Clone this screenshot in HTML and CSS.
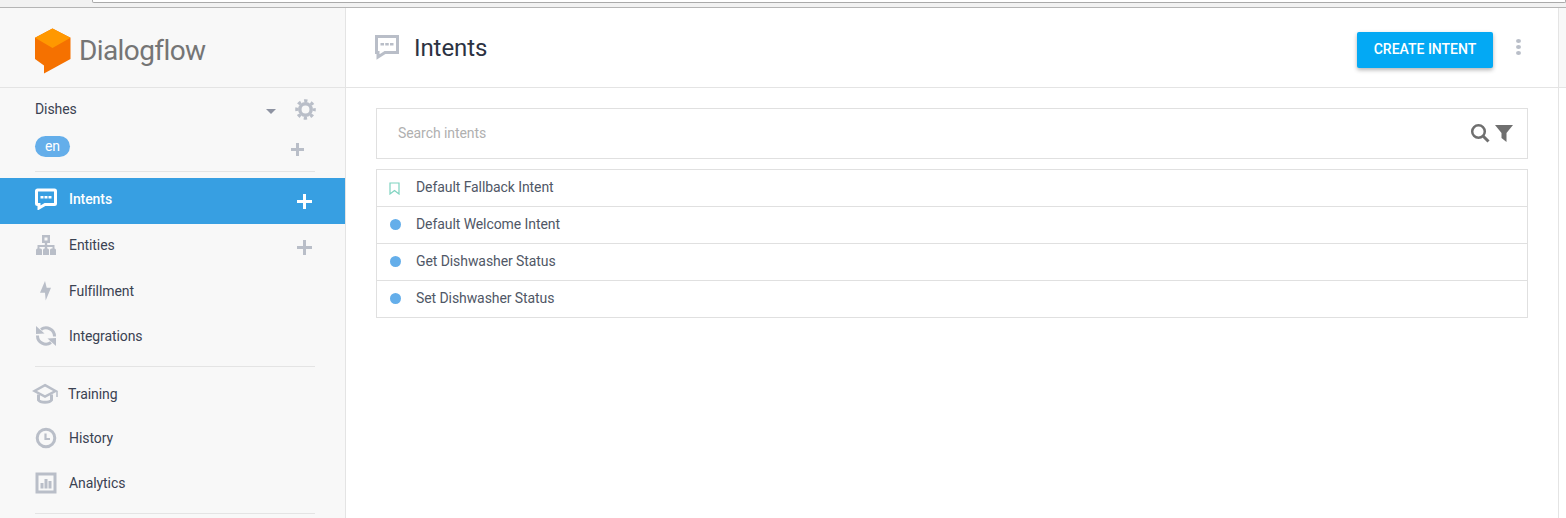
FILE: index.html
```html
<!DOCTYPE html>
<html lang="en">
<head>
    <meta charset="UTF-8">
    <meta name="viewport" content="width=device-width, initial-scale=1.0">
    <title>Dialogflow - Intents</title>
    <link rel="stylesheet" href="styles.css">
</head>
<body>
    <div class="browser-strip">
        <div class="address-box"></div>
    </div>

    <div class="app">
        <aside class="sidebar">
            <div class="logo">
                <svg class="logo-icon" width="36" height="46" viewBox="0 0 36 46">
                    <path d="M17.500 0.500L35.500 9.800V31L9 45.500V37.500L0 31V9.800Z" fill="#f57100"/>
                    <path d="M17.500 0.500L35.500 9.800L17.500 20L0 9.800Z" fill="#ff9800"/>
                </svg>
                <span class="logo-text">Dialogflow</span>
            </div>

            <div class="project">
                <div class="project-row">
                    <span class="project-name">Dishes</span>
                    <span class="caret"></span>
                    <svg class="gear" width="21" height="21" viewBox="0 0 24 24">
                        <circle cx="12" cy="12" r="6.500" fill="none" stroke="#b9bec8" stroke-width="4"/>
                        <circle cx="12" cy="12" r="10" fill="none" stroke="#b9bec8" stroke-width="3.500" stroke-dasharray="3.850 4" stroke-dashoffset="1.900"/>
                    </svg>
                </div>
                <div class="lang-row">
                    <span class="lang-pill">en</span>
                    <span class="plus plus-lang"></span>
                </div>
            </div>

            <div class="divider"></div>

            <nav class="nav nav-first">
                <a class="nav-item active" href="#">
                    <svg class="nav-icon" width="22" height="22" viewBox="0 0 22 22">
                        <path d="M2.500 2H19.500A1 1 0 0 1 20.500 3V15.500A1 1 0 0 1 19.500 16.500H10L4 20V16.500H2.500A1 1 0 0 1 1.500 15.500V3A1 1 0 0 1 2.500 2Z" fill="none" stroke="#fff" stroke-width="3"/>
                        <rect x="5.500" y="8" width="3" height="2.500" fill="#fff"/>
                        <rect x="9.500" y="8" width="3" height="2.500" fill="#fff"/>
                        <rect x="13.500" y="8" width="3" height="2.500" fill="#fff"/>
                    </svg>
                    <span>Intents</span>
                    <span class="plus plus-white"></span>
                </a>
                <a class="nav-item" href="#">
                    <svg class="nav-icon" width="22" height="22" viewBox="0 0 22 22">
                        <path d="M7 1H15V9H12.200V11H19.500V15H17.500V13H12.200V15H9.800V13H4.500V15H2.500V11H9.800V9H7ZM9.500 3.500V6.500H12.500V3.500Z" fill="#b9bec8" fill-rule="evenodd"/>
                        <path d="M1 16A1.500 1.500 0 0 1 2.500 14.500H5.500A1.500 1.500 0 0 1 7 16V21H1ZM8 16A1.500 1.500 0 0 1 9.500 14.500H12.500A1.500 1.500 0 0 1 14 16V21H8ZM15 16A1.500 1.500 0 0 1 16.500 14.500H19.500A1.500 1.500 0 0 1 21 16V21H15Z" fill="#b9bec8"/>
                    </svg>
                    <span>Entities</span>
                    <span class="plus"></span>
                </a>
                <a class="nav-item" href="#">
                    <svg class="nav-icon" width="22" height="22" viewBox="0 0 22 22">
                        <path d="M10 1L5 12.700H10L10.700 20.500L16 7.700H11.700Z" fill="#b9bec8"/>
                    </svg>
                    <span>Fulfillment</span>
                </a>
                <a class="nav-item nav-last" href="#">
                    <svg class="nav-icon" width="22" height="22" viewBox="0 0 22 22">
                        <path d="M6 4.500A8.500 8.500 0 0 1 19.500 11.500" fill="none" stroke="#b9bec8" stroke-width="3"/>
                        <path d="M16 17.500A8.500 8.500 0 0 1 2.500 10.500" fill="none" stroke="#b9bec8" stroke-width="3"/>
                        <path d="M1 1L9.500 8.500L1 9Z" fill="#b9bec8"/>
                        <path d="M21 21L12.500 13.500L21 13Z" fill="#b9bec8"/>
                    </svg>
                    <span>Integrations</span>
                </a>
            </nav>

            <div class="divider divider-nav"></div>

            <nav class="nav nav-second">
                <a class="nav-item nav-training" href="#">
                    <svg class="nav-icon icon-training" width="26" height="22" viewBox="0 0 26 22">
                        <path d="M13 2.200L23.500 8L13 13.500L2.500 8Z" fill="none" stroke="#b9bec8" stroke-width="2.500"/>
                        <path d="M6.500 11.500V17C8.500 20 17.500 20 19.500 17V11.500" fill="none" stroke="#b9bec8" stroke-width="3"/>
                        <path d="M25 8V14" stroke="#b9bec8" stroke-width="1.500"/>
                    </svg>
                    <span>Training</span>
                </a>
                <a class="nav-item nav-history" href="#">
                    <svg class="nav-icon" width="22" height="22" viewBox="0 0 22 22">
                        <circle cx="11" cy="11" r="8.800" fill="none" stroke="#b9bec8" stroke-width="3"/>
                        <path d="M10.500 6.500V12H15" fill="none" stroke="#b9bec8" stroke-width="2.200"/>
                    </svg>
                    <span>History</span>
                </a>
                <a class="nav-item" href="#">
                    <svg class="nav-icon" width="22" height="22" viewBox="0 0 22 22">
                        <rect x="2" y="2" width="18" height="18" fill="none" stroke="#b9bec8" stroke-width="3"/>
                        <rect x="5.500" y="11" width="3" height="5.500" fill="#b9bec8"/>
                        <rect x="9.500" y="7" width="3" height="9.500" fill="#b9bec8"/>
                        <rect x="13.500" y="9" width="3" height="7.500" fill="#b9bec8"/>
                    </svg>
                    <span>Analytics</span>
                </a>
            </nav>

            <div class="divider divider-bottom"></div>
        </aside>

        <main class="content">
            <header class="page-header">
                <svg class="title-icon" width="26" height="26" viewBox="0 0 26 26">
                    <path d="M2.500 2.500H23.500V18.500H11L4 23V18.500H2.500Z" fill="none" stroke="#b9bec8" stroke-width="3"/>
                    <rect x="6.500" y="9" width="3.500" height="2.500" fill="#b9bec8"/>
                    <rect x="11.250" y="9" width="3.500" height="2.500" fill="#b9bec8"/>
                    <rect x="16" y="9" width="3.500" height="2.500" fill="#b9bec8"/>
                </svg>
                <h1>Intents</h1>
                <button class="btn-create">CREATE INTENT</button>
                <div class="more">
                    <span></span>
                    <span></span>
                    <span></span>
                </div>
            </header>

            <div class="body-wrap">
                <div class="search-box">
                    <span class="search-text">Search intents</span>
                    <svg width="20" height="20" viewBox="0 0 20 20">
                        <circle cx="8.500" cy="8.500" r="6.300" fill="none" stroke="#6f6f6f" stroke-width="2.500"/>
                        <path d="M13 13L18.500 18.500" stroke="#6f6f6f" stroke-width="3"/>
                    </svg>
                    <svg class="filter" width="18" height="18" viewBox="0 0 18 18">
                        <path d="M0 1H18L11.500 9V18L6.500 14V9Z" fill="#6f6f6f"/>
                    </svg>
                </div>

                <ul class="intent-list">
                    <li>
                        <svg class="bookmark" width="11" height="13" viewBox="0 0 11 13">
                            <path d="M1 1H10V12L5.500 8.500L1 12Z" fill="none" stroke="#7fd3c0" stroke-width="1.200"/>
                        </svg>
                        <span>Default Fallback Intent</span>
                    </li>
                    <li><i class="dot"></i><span>Default Welcome Intent</span></li>
                    <li><i class="dot"></i><span>Get Dishwasher Status</span></li>
                    <li><i class="dot"></i><span>Set Dishwasher Status</span></li>
                </ul>
            </div>
        </main>

        <div class="gutter"></div>
    </div>
</body>
</html>
```

FILE: styles.css
```css
* {
    margin: 0;
    padding: 0;
    box-sizing: border-box;
}

html, body {
    height: 518px;
    overflow: hidden;
}

body {
    font-family: 'Roboto', sans-serif;
    font-size: 14px;
    letter-spacing: -0.08px;
    color: #3b4252;
    background-color: #fff;
}

.browser-strip {
    height: 8px;
    background-color: #f2f2f2;
    border-bottom: 1px solid #b5b5b5;
    padding-left: 92px;
}

.address-box {
    height: 3px;
    background-color: #fff;
    border: 1px solid #aaa;
    border-top: none;
    border-radius: 0 0 2px 2px;
}

.app {
    display: flex;
    height: 510px;
}

/* sidebar */
.sidebar {
    width: 346px;
    flex-shrink: 0;
    background-color: #f8f8f8;
    border-right: 1px solid #e4e4e4;
}

.logo {
    height: 80px;
    padding: 20px 0 0 35px;
    display: flex;
    align-items: flex-start;
    border-bottom: 1px solid #e4e4e4;
}

.logo-text {
    font-size: 28px;
    color: #757575;
    margin: 6px 0 0 8px;
    letter-spacing: -0.6px;
}

.project {
    padding: 0 29px 0 35px;
}

.project-row {
    height: 42px;
    display: flex;
    align-items: center;
}

.project-name {
    flex: 1;
    color: #3b4252;
}

.caret {
    width: 0;
    height: 0;
    border-left: 5px solid transparent;
    border-right: 5px solid transparent;
    border-top: 5px solid #8e93a2;
    margin: 4px 19px 0 0;
}

.lang-row {
    height: 41px;
    padding-top: 6px;
    display: flex;
    justify-content: space-between;
}

.lang-pill {
    width: 35px;
    height: 21px;
    border-radius: 11px;
    background-color: #64aeea;
    color: #fff;
    text-align: center;
    line-height: 20px;
}

.plus {
    position: relative;
    display: block;
    width: 15px;
    height: 15px;
    margin: 4px 3px 0 auto;
}

.plus::before,
.plus::after {
    content: "";
    position: absolute;
    background-color: #b9bec8;
}

.plus::before {
    left: 0;
    top: 6px;
    width: 100%;
    height: 3px;
}

.plus::after {
    left: 6px;
    top: 0;
    width: 3px;
    height: 100%;
}

.plus-lang {
    margin: 7px 12px 0 0;
    width: 13px;
    height: 13px;
}

.plus-lang::before {
    top: 5px;
}

.plus-lang::after {
    left: 5px;
}

.plus-white::before,
.plus-white::after {
    background-color: #fff;
}

.divider {
    height: 1px;
    margin: 0 30px 0 35px;
    background-color: #e4e4e4;
}

.nav-first {
    margin-top: 6px;
}

.nav-item {
    height: 46px;
    display: flex;
    align-items: center;
    padding: 0 30px 4px 35px;
    color: #3b4252;
    text-decoration: none;
}

.nav-item.active {
    background-color: #379fe2;
    color: #fff;
    font-weight: 500;
}

.nav-item.nav-last {
    height: 45px;
    padding-bottom: 5px;
}

.nav-icon {
    margin-right: 12px;
    flex-shrink: 0;
}

.divider-nav {
    margin-top: 5px;
}

.nav-second {
    margin-top: 7px;
}

.nav-second .nav-item {
    height: 44.500px;
}

.nav-second .nav-history {
    padding-bottom: 6px;
}

.icon-training {
    margin: 0 10px 0 -3px;
}

.divider-bottom {
    margin-top: 5.500px;
}

/* main content */
.content {
    flex: 1;
    min-width: 0;
    border-right: 1px solid #e4e4e4;
}

.gutter {
    width: 7px;
    height: 80px;
    background-color: #f8f8f8;
    border-bottom: 1px solid #e4e4e4;
}

.page-header {
    height: 80px;
    display: flex;
    align-items: center;
    padding: 0 37px 0 28px;
    border-bottom: 1px solid #e4e4e4;
}

.title-icon {
    margin: -1px 14px 0 0;
}

.page-header h1 {
    flex: 1;
    font-size: 24px;
    font-weight: 400;
    color: #2c3242;
    margin-top: 1px;
}

.btn-create {
    width: 136px;
    height: 36px;
    margin: 4px 23px 0 0;
    padding-bottom: 2px;
    background-color: #03a9f4;
    border: none;
    border-radius: 2px;
    color: #fff;
    font-family: inherit;
    font-size: 14px;
    font-weight: 500;
    box-shadow: 0 2px 4px rgba(0, 0, 0, 0.3);
}

.more {
    display: flex;
    flex-direction: column;
    gap: 2px;
    margin-top: -2px;
}

.more span {
    display: block;
    width: 5px;
    height: 4px;
    border-radius: 50%;
    background-color: #b9bec8;
}

.body-wrap {
    padding: 20px 30px 0;
}

.search-box {
    height: 51px;
    display: flex;
    align-items: center;
    padding: 0 14px 2px 21px;
    border: 1px solid #e0e0e0;
    margin-bottom: 10px;
}

.search-text {
    flex: 1;
    color: #b0b0b0;
}

.filter {
    margin-left: 5px;
}

.intent-list {
    list-style: none;
    border: 1px solid #e0e0e0;
    border-bottom: none;
}

.intent-list li {
    height: 37px;
    display: flex;
    align-items: center;
    padding: 0 0 2px 13px;
    border-bottom: 1px solid #e0e0e0;
    color: #505766;
}

.intent-list li span {
    margin-left: 15px;
}

.bookmark {
    width: 11px;
    margin: 3px 1px 0 -1px;
}

.dot {
    display: block;
    width: 11px;
    height: 11px;
    border-radius: 50%;
    background-color: #64aeea;
}
```
